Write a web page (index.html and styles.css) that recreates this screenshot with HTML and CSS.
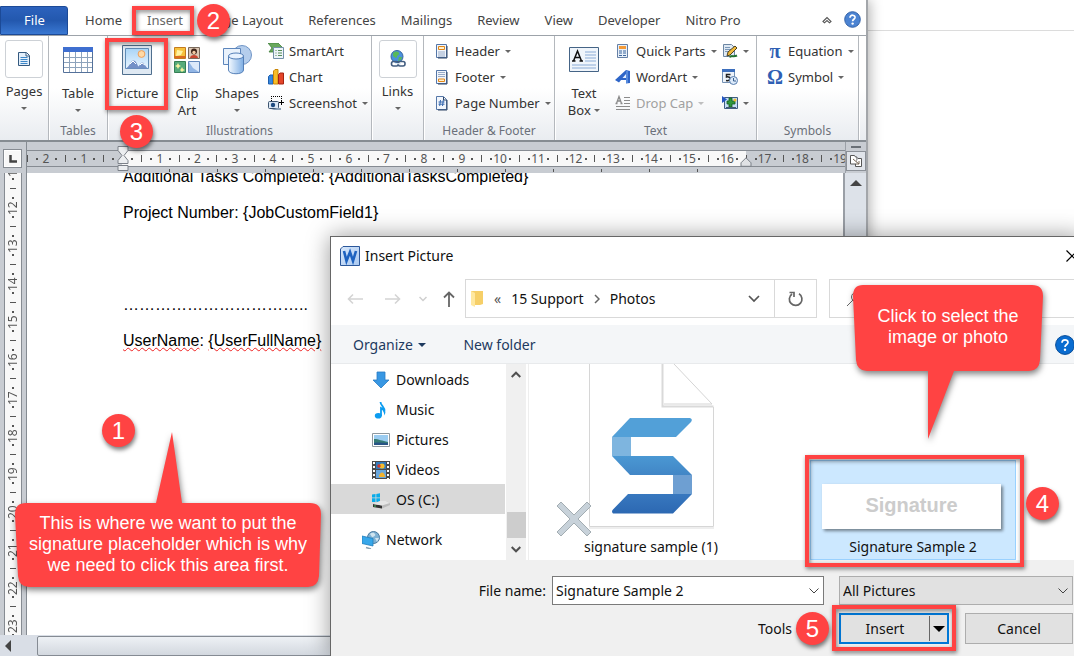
FILE: index.html
```html
<!DOCTYPE html>
<html lang="en">
<head>
<meta charset="utf-8">
<title>Insert Picture</title>
<link rel="stylesheet" href="styles.css">
</head>
<body>
<main class="desktop">
  <section class="word" aria-label="Word">
    <nav class="tabs">
      <button class="tab tab-file">File</button>
      <button class="tab">Home</button>
      <button class="tab tab-active">Insert</button>
      <button class="tab">Page Layout</button>
      <button class="tab">References</button>
      <button class="tab">Mailings</button>
      <button class="tab">Review</button>
      <button class="tab">View</button>
      <button class="tab">Developer</button>
      <button class="tab">Nitro Pro</button>
      <span class="tabs-end">
        <button class="plain" aria-label="Minimize ribbon"><svg width="10" height="8" viewBox="0 0 10 8"><path d="M1 5.500 5 1.500 9 5.500 7.500 6.800 5 4.600 2.500 6.800Z" fill="#fff" stroke="#555" stroke-width="1.100"/></svg></button>
        <button class="plain" aria-label="Help"><svg width="17" height="17" viewBox="0 0 17 17"><circle cx="8.500" cy="8.500" r="7.800" fill="#4b83d2" stroke="#3463a8"/><path d="M6 6.700c0-3.400 5.300-3.200 5 0-.2 1.500-2.400 1.700-2.400 3.500" fill="none" stroke="#fff" stroke-width="1.700"/><circle cx="8.600" cy="12.600" r="1.200" fill="#fff"/></svg></button>
      </span>
    </nav>

    <div class="ribbon">
      <section class="group g-pages">
        <div class="tools">
          <button class="large compact">
            <span class="large-icon boxed"><svg width="12" height="14" viewBox="0 0 12 14"><path d="M.5.500h8l3 3v10H.5z" fill="#e3effb" stroke="#34597f"/><path d="M8 1v3h3" fill="#fff" stroke="#34597f"/><path d="M2.500 5.500h7M2.500 7.500h7M2.500 9.500h7M2.500 11.500h7" stroke="#3b86c8"/></svg></span>
            <span>Pages</span><i class="caret"></i>
          </button>
        </div>
      </section>

      <section class="group g-tables">
        <div class="tools">
          <button class="large">
            <span class="large-icon"><svg width="30" height="26" viewBox="0 0 30 26"><path d="M.5.500h29v25H.5z" fill="#fff" stroke="#54719a"/><path d="M0 0h30v5H0z" fill="#3f6fd0"/><path d="M1 10.500h28M1 15.500h28M1 20.500h28M6.500 5v20M12.500 5v20M18.500 5v20M24.500 5v20" stroke="#8da3bc"/></svg></span>
            <span>Table</span><i class="caret"></i>
          </button>
        </div>
        <h2>Tables</h2>
      </section>

      <section class="group g-illus">
        <div class="tools">
          <button class="large">
            <span class="large-icon"><svg width="30" height="30" viewBox="0 0 30 30"><defs><linearGradient id="sky" x2="0" y2="1"><stop stop-color="#a9d4f6"/><stop offset="1" stop-color="#e9f5ff"/></linearGradient></defs><path d="M.5.500h29v29H.5z" fill="#dfe9f3" stroke="#4f6f8e"/><path d="M3.500 3.500h23v20h-23z" fill="url(#sky)" stroke="#5f8bb4"/><circle cx="19.500" cy="9" r="3.400" fill="#ffd9a5" stroke="#f0a05a"/><path d="M3.500 23.500c4-1 5-8 8-8s4 5 5 6c2-2 2-4 4-4s3 5 6 6z" fill="#7390c7"/><path d="m8 19 3-3 3 3M18 20l2-2 3 2" fill="none" stroke="#fff"/></svg></span>
            <span>Picture</span>
          </button>
          <button class="large">
            <span class="large-icon"><svg width="26" height="26" viewBox="0 0 26 26"><path d="M.5.500h11v11H.5z" fill="#f7c23c" stroke="#c47b1d"/><path d="M3 3l6 1-2 4-5 1z" fill="#fff3a1"/><path d="M1 9h10v2H1z" fill="#dc6a20"/><path d="M14.500.5h11v11h-11z" fill="#dcc8b4" stroke="#7a6a5c"/><circle cx="20" cy="4.500" r="3" fill="#40261a"/><circle cx="20" cy="5.500" r="1.700" fill="#f3c9a2"/><path d="M16 11c0-4 8-4 8 0z" fill="#c9452f"/><path d="M.5 14.500h11v11H.5z" fill="#56ab7b" stroke="#357f54"/><path d="m4 16 1 2 2 1-2 1-1 2-1-2-2-1 2-1zM8 20l1 2 2 1-2 1-1 1-1-1-1-1 1-1z" fill="#f8f2a0"/><path d="M14.500 14.500h11v11h-11z" fill="#91b5e5" stroke="#6388bc"/><path d="m15 15 4 6 6 4V15z" fill="#dce9fa"/></svg></span>
            <span>Clip</span><span>Art</span>
          </button>
          <button class="large">
            <span class="large-icon"><svg width="30" height="30" viewBox="0 0 30 30"><defs><linearGradient id="can"><stop stop-color="#f3f9ff"/><stop offset="1" stop-color="#7eaee4"/></linearGradient></defs><circle cx="20" cy="10" r="9.500" fill="#b4cdec" stroke="#6f94c6"/><path d="M1.500 3.500h17v16h-17z" fill="#e9f2fc" stroke="#5d86bc"/><path d="M6.500 11v14c0 5 15 5 15 0V11z" fill="url(#can)" stroke="#5580b8"/><ellipse cx="14" cy="11" rx="7.500" ry="3" fill="#e7f2ff" stroke="#5580b8"/></svg></span>
            <span>Shapes</span><i class="caret"></i>
          </button>
          <div class="stack">
            <button class="small"><svg width="16" height="16" viewBox="0 0 16 16"><path d="M0 0h10l4 4-3 5H1l3-4z" fill="#69a85c" stroke="#3f7d3b" stroke-width=".8"/><path d="M5.500 4.500h10v11h-10z" fill="#eef4fa" stroke="#7390a8"/><path d="M7.500 7.500h1M10 7.500h4M7.500 10h1M10 10h4M7.500 12.500h1M10 12.500h4" stroke="#568c56"/></svg><span>SmartArt</span></button>
            <button class="small"><svg width="16" height="16" viewBox="0 0 16 16"><path d="M.5 7.500 2 6h3v9H.5z" fill="#3889e0" stroke="#1d5fae"/><path d="M5.500 2 7 .5h3V15H5.500z" fill="#f8bd27" stroke="#c98608"/><path d="M10.500 5.500 12 4h3.500v11h-5z" fill="#e4452a" stroke="#a52412"/></svg><span>Chart</span></button>
            <button class="small"><svg width="16" height="16" viewBox="0 0 16 16"><path d="M3 1.500h11M3.500 1v5M13.500 1v5" stroke="#000" stroke-dasharray="1 1" fill="none"/><path d="M11 7.500h5M13.500 5v5" stroke="#000"/><rect x=".5" y="6.500" width="10" height="7" rx="1" fill="#dce8f4" stroke="#3d5570"/><circle cx="5" cy="10" r="2.200" fill="#1e4b80"/><path d="M9 13h4v2H3" fill="#8ba0b6"/></svg><span>Screenshot</span><i class="caret"></i></button>
          </div>
        </div>
        <h2>Illustrations</h2>
      </section>

      <section class="group g-links">
        <div class="tools">
          <button class="large compact">
            <span class="large-icon boxed"><svg width="16" height="18" viewBox="0 0 16 18"><circle cx="7" cy="6.500" r="6" fill="#4b91dd" stroke="#3566a0"/><path d="M3 3c2-2 5-2 6 0s-2 2-2 4-3 0-4-1zM9 7l3 0-1 3-3 1z" fill="#58b95b"/><rect x="1.500" y="11.500" width="7" height="4.500" rx="2" fill="none" stroke="#425d80" stroke-width="1.600"/><rect x="8" y="11.500" width="7" height="4.500" rx="2" fill="none" stroke="#425d80" stroke-width="1.600"/><path d="M5 13.700h6" stroke="#dce7f3" stroke-width="1.200"/></svg></span>
            <span>Links</span><i class="caret"></i>
          </button>
        </div>
      </section>

      <section class="group g-header">
        <div class="tools">
          <div class="stack">
            <button class="small"><svg width="16" height="16" viewBox="0 0 16 16"><path d="M2.500 1.500h10v13h-10z" fill="#f2f6fc" stroke="#5577a8"/><path d="M13 3v12H4" fill="none" stroke="#2e4565"/><path d="M4.500 3.500h6v3h-6z" fill="#fff1cf" stroke="#e08518"/><path d="M4 9h7M4 11h7M4 13h7" stroke="#98abc8"/></svg><span>Header</span><i class="caret"></i></button>
            <button class="small"><svg width="16" height="16" viewBox="0 0 16 16"><path d="M2.500 1.500h10v13h-10z" fill="#f2f6fc" stroke="#5577a8"/><path d="M13 3v12H4" fill="none" stroke="#2e4565"/><path d="M4.500 10h6v2.500h-6z" fill="#fff1cf" stroke="#e08518"/><path d="M4 3.500h7M4 5.500h7M4 7.500h7" stroke="#98abc8"/></svg><span>Footer</span><i class="caret"></i></button>
            <button class="small"><svg width="16" height="16" viewBox="0 0 16 16"><path d="M2.500 1.500h7l3 3v10h-10z" fill="#f2f6fc" stroke="#5577a8"/><path d="M9.500 2v3h3M13 5v10H4" fill="none" stroke="#2e4565"/><path d="m6.500 5-.8 6M9.300 5l-.8 6M4.500 7h6M4.500 9.200h6" stroke="#3567ae"/></svg><span>Page Number</span><i class="caret"></i></button>
          </div>
        </div>
        <h2>Header &amp; Footer</h2>
      </section>

      <section class="group g-text">
        <div class="tools">
          <button class="large">
            <span class="large-icon"><svg width="30" height="26" viewBox="0 0 30 26"><path d="M.5.500h29v24H.5z" fill="#f0f5fb" stroke="#456486"/><path d="m4.500 14 4-10 4 10M6 10.500h5M3 14h3.500M10.500 14H14" fill="none" stroke="#111" stroke-width="1.500"/><path d="M16 5h11M16 8h11M16 11h11M16 14h11M3 18h24M3 21h24" stroke="#8aabd6"/></svg></span>
            <span>Text</span><span class="with-caret">Box <i class="caret"></i></span>
          </button>
          <div class="stack">
            <button class="small"><svg width="16" height="16" viewBox="0 0 16 16"><path d="M2.500 1.500h10v13h-10z" fill="#e9f0f9" stroke="#6580a6"/><path d="M4 3h7v3H4z" fill="#f39a38"/><path d="M4 8h3M8 8h3M4 10h3M8 10h3M4 12.500h3M8 12.500h3" stroke="#3b679f"/></svg><span>Quick Parts</span><i class="caret"></i></button>
            <button class="small"><svg width="16" height="16" viewBox="0 0 16 16"><path d="M0 11 11 1l4 1v12l-4 .500V11H6l-2 2.500z" fill="#2e65c8"/><path d="M11 5 7.500 9H11z" fill="#e6f0ff"/><path d="M12 2v12" stroke="#7fb0f0"/></svg><span>WordArt</span><i class="caret"></i></button>
            <button class="small" disabled><svg width="16" height="16" viewBox="0 0 16 16"><path d="m1.500 8.500 2.500-7 2.500 7M2.500 6h3M.5 8.500h2M5.500 8.500h2" fill="none" stroke="#8b8b8b" stroke-width="1.300"/><path d="M9 2.500h6M9 5.500h6M9 8.500h6M1 11.500h14M1 14.500h14" stroke="#8b8b8b"/></svg><span>Drop Cap</span><i class="caret"></i></button>
          </div>
          <div class="stack">
            <button class="small" aria-label="Signature line"><svg width="16" height="16" viewBox="0 0 16 16"><path d="M1.500 1.500h8l3 3v9h-11z" fill="#dfe9f3" stroke="#6c86a3"/><path d="M3 4.500h5M3 6.500h6M3 8.500h4" stroke="#7b98b8"/><path d="m5 13 1-4 7-6 2 2-7 7z" fill="#f0b93c" stroke="#4f431f"/><path d="M8 14.500c1-3 3 0 7-2" fill="none" stroke="#247331" stroke-width="2"/></svg><i class="caret"></i></button>
            <button class="small" aria-label="Date and time"><svg width="16" height="16" viewBox="0 0 16 16"><path d="M.5.500h12v13H.5z" fill="#edf3fa" stroke="#7491b3"/><path d="M0 0h13v3H0z" fill="#3d6fbd"/><path d="M8.500 5.500h-4v2.500c5-1 5 4.500-.5 3.500" fill="none" stroke="#222" stroke-width="1.500"/><circle cx="11.500" cy="11.500" r="4" fill="#dceafa" stroke="#587dad"/><path d="M11.500 9v3h2.500" fill="none" stroke="#375d8d"/></svg></button>
            <button class="small" aria-label="Object"><svg width="16" height="16" viewBox="0 0 16 16"><path d="M2.500 2.500h13v11h-13z" fill="#c4dcf6" stroke="#3f5d82"/><path d="M0 1v7l5-3.500z" fill="#2456c0"/><path d="M7 3h3v3h3v3h-3v3H7V9H5V6h2z" fill="#2d963b" stroke="#145b22" stroke-width=".8"/><circle cx="13" cy="5" r="1.500" fill="#f2bd2c"/><path d="M4 12.500h10" stroke="#445a70"/></svg><i class="caret"></i></button>
          </div>
        </div>
        <h2>Text</h2>
      </section>

      <section class="group g-symbols">
        <div class="tools">
          <div class="stack">
            <button class="small"><span class="glyph">π</span><span>Equation</span><i class="caret"></i></button>
            <button class="small"><span class="glyph">Ω</span><span>Symbol</span><i class="caret"></i></button>
          </div>
        </div>
        <h2>Symbols</h2>
      </section>
    </div>

    <div class="ruler-row">
      <div class="corner"><button aria-label="Tab stop"><svg width="8" height="8" viewBox="0 0 8 8"><path d="M1.500 0v6.500H8" fill="none" stroke="#444" stroke-width="2.500"/></svg></button></div>
      <div class="ruler-track">
        <div class="ruler">
          <span class="cm out">2</span><span class="cm out">1</span><span class="cm zero"></span><span class="cm">1</span><span class="cm">2</span><span class="cm">3</span><span class="cm">4</span><span class="cm">5</span><span class="cm">6</span><span class="cm">7</span><span class="cm">8</span><span class="cm">9</span><span class="cm">10</span><span class="cm">11</span><span class="cm">12</span><span class="cm">13</span><span class="cm">14</span><span class="cm">15</span><span class="cm">16</span><span class="cm out">17</span><span class="cm out">18</span><span class="cm out">19</span>
        </div>
        <div class="tab-stops"></div>
        <svg class="indent-left" width="12" height="26" viewBox="0 0 12 26"><path d="M1 .5h10v4L7 9.500l4 5v3H1v-3l4-5-4-5zM1 19.500h10v5H1z" fill="#eceef0" stroke="#7b8088"/></svg>
        <svg class="indent-right" width="12" height="10" viewBox="0 0 12 10"><path d="m6 .8 5 5v3.500H1V5.800z" fill="#e0e2e5" stroke="#7b8088"/></svg>
      </div>
      <div class="view-col"><i class="split"></i><button aria-label="View ruler"><svg width="12" height="12" viewBox="0 0 12 12"><path d="M.5.500h4l1 1.500h1.500v5l-1.500 2H.5z" fill="#fff" stroke="#555"/><path d="M8 3.500h3.500v8h-6V9" fill="#fff" stroke="#555"/><path d="m3 4 6 5M9 6v3H6" fill="none" stroke="#765"/></svg></button></div>
    </div>

    <div class="doc-row">
      <div class="vruler">
        <span class="vcm first">11</span><span class="vcm">12</span><span class="vcm">13</span><span class="vcm">14</span><span class="vcm">15</span><span class="vcm">16</span><span class="vcm">17</span><span class="vcm">18</span><span class="vcm">19</span><span class="vcm">20</span><span class="vcm">21</span><span class="vcm">22</span><span class="vcm">23</span>
      </div>
      <article class="page">
        <p>Additional Tasks Completed: {AdditionalTasksCompleted}</p>
        <p>Project Number: {JobCustomField1}</p>
        <p class="sign-line">……………………………..</p>
        <p><span class="misspelt">UserName</span>: <span class="misspelt">{UserFullName}</span></p>
      </article>
      <div class="vscroll"><svg width="12" height="6" viewBox="0 0 12 6"><path d="M0 6 6 0l6 6z" fill="#444"/></svg></div>
    </div>
    <div class="hscroll"><svg width="6" height="12" viewBox="0 0 6 12"><path d="M6 0 0 6l6 6z" fill="#444"/></svg><div class="hthumb"></div></div>
  </section>

  <section class="dialog" role="dialog" aria-label="Insert Picture">
    <header class="title-bar">
      <svg width="20" height="20" viewBox="0 0 20 20"><defs><linearGradient id="wd" x2="1" y2="1"><stop stop-color="#d8e8fb"/><stop offset="1" stop-color="#a9c8f0"/></linearGradient></defs><path d="M3 .5h16.500v19H.5V3z" fill="url(#wd)" stroke="#2b579a"/><path d="m4 5 2.500 10L10 6l3 9L16 5" fill="none" stroke="#1d62c0" stroke-width="2.600"/></svg>
      <h1>Insert Picture</h1>
      <button class="plain close" aria-label="Close"><svg width="12" height="12" viewBox="0 0 12 12"><path d="m.5.500 11 11M11.500.5l-11 11" stroke="#000" stroke-width="1.200"/></svg></button>
    </header>

    <div class="nav-row">
      <div class="nav-arrows">
        <button class="plain" aria-label="Back"><svg width="16" height="12" viewBox="0 0 16 12"><path d="M16 6H1.500M6 1.500 1.500 6 6 10.500" fill="none" stroke="#d4d4d4" stroke-width="1.600"/></svg></button>
        <button class="plain" aria-label="Forward"><svg width="16" height="12" viewBox="0 0 16 12"><path d="M0 6h14.500M10 1.500 14.500 6 10 10.500" fill="none" stroke="#d4d4d4" stroke-width="1.600"/></svg></button>
        <button class="plain" aria-label="Recent"><svg width="8" height="6" viewBox="0 0 8 6"><path d="m.5 1 3.500 3.500L7.500 1" fill="none" stroke="#cfcfcf" stroke-width="1.500"/></svg></button>
        <button class="plain" aria-label="Up"><svg width="12" height="16" viewBox="0 0 12 16"><path d="M6 16V1.500M1 6.500l5-5 5 5" fill="none" stroke="#666" stroke-width="1.800"/></svg></button>
      </div>
      <div class="address">
        <svg width="13" height="18" viewBox="0 0 13 18"><path d="M0 1h12v13l-3 1H0z" fill="#f6cf68"/><path d="M0 1l4 2v14l-4-2z" fill="#ffe8a0"/></svg>
        <span class="crumb-sep">«</span>
        <span>15 Support</span>
        <svg width="6" height="10" viewBox="0 0 6 10"><path d="m1 1 4 4-4 4" fill="none" stroke="#666" stroke-width="1.500"/></svg>
        <span>Photos</span>
        <button class="plain addr-down" aria-label="Previous locations"><svg width="12" height="8" viewBox="0 0 12 8"><path d="m1 1 5 5 5-5" fill="none" stroke="#555" stroke-width="1.700"/></svg></button>
        <button class="plain refresh" aria-label="Refresh"><svg width="16" height="16" viewBox="0 0 16 16"><path d="M11 2.800A6.300 6.300 0 1 1 4 3M1.500 1.500H6V6" fill="none" stroke="#666" stroke-width="1.700"/></svg></button>
      </div>
      <label class="search"><svg width="16" height="16" viewBox="0 0 16 16"><circle cx="10" cy="6" r="4.500" fill="none" stroke="#666"/><path d="m1 15 6-6" stroke="#666"/></svg><input type="text" aria-label="Search"></label>
    </div>

    <div class="command-row">
      <button>Organize <i class="caret"></i></button>
      <button>New folder</button>
      <button class="help" aria-label="Help"><svg width="20" height="20" viewBox="0 0 20 20"><circle cx="10" cy="10" r="9.400" fill="#0a6cd0" stroke="#084d98"/><path d="M7 7.800C7 4 13 4 13 7.400c0 2-3 2.200-3 4.600" fill="none" stroke="#fff" stroke-width="1.700"/><circle cx="10" cy="14.700" r="1.200" fill="#fff"/></svg></button>
    </div>

    <div class="browser">
      <ul class="tree">
        <li><svg width="18" height="18" viewBox="0 0 18 18"><path d="M5 1h8v8h4l-8 8-8-8h4z" fill="#3897e3" stroke="#2a7cc4" stroke-width=".8"/></svg>Downloads</li>
        <li><svg width="18" height="18" viewBox="0 0 18 18"><path d="M8.500 1c0 4 5 5 4 10-1-3-2.500-3.500-3.500-4v8" fill="none" stroke="#0c9cf0" stroke-width="1.800"/><ellipse cx="6.300" cy="14.700" rx="3.500" ry="2.800" fill="#0c9cf0"/></svg>Music</li>
        <li><svg width="18" height="18" viewBox="0 0 18 18"><path d="M.5 2.500h17v13H.5z" fill="#fff" stroke="#8e989f"/><path d="M2 4h14v10H2z" fill="#9bccf1"/><path d="M2 8c5 0 8 2 14 3v3H2z" fill="#367c75"/><path d="M2 12c5-1 9 0 14 0v2H2z" fill="#285486"/></svg>Pictures</li>
        <li><svg width="18" height="18" viewBox="0 0 18 18"><path d="M0 0h18v18H0z" fill="#4a4a4a"/><path d="M4 1h10v7H4z" fill="#317bbd"/><path d="M4 9h10v8H4z" fill="#69a7dd"/><circle cx="10" cy="5" r="2.600" fill="#f4bd2f"/><circle cx="7" cy="5" r="1.700" fill="#d5372e"/><path d="M7 16c0-6 6-6 6 0z" fill="#f1b22e"/><path d="M2 1v17M16 1v17" stroke="#fff" stroke-width="2" stroke-dasharray="2 2"/></svg>Videos</li>
        <li class="selected"><svg width="18" height="18" viewBox="0 0 18 18"><path d="M0 3.500 3.500 3v3.500H0zM4.300 2.900 8 2.300v4.200H4.300zM0 7.300h3.500V11H0zM4.300 7.300H8v4l-3.700-.5z" fill="#09acea"/><path d="m1 13 7-3h6l4 2v2l-8 3.500L1 16z" fill="#bbb"/><path d="m1 13 9 1.500v3L1 16z" fill="#333"/><path d="m1 13 7-3h6l4 2-8 2.500z" fill="#e5e5e5"/><circle cx="3" cy="15" r=".8" fill="#4cd66a"/></svg>OS (C:)</li>
        <li class="root"><svg width="18" height="18" viewBox="0 0 18 18"><circle cx="11.500" cy="6.500" r="6" fill="#7fb1d3" stroke="#49789d"/><path d="M8 3c2-2 4-1 5 0s-1 3-3 3zM13 7l4 0-2 4z" fill="#d0e4ef"/><path d="m0 5 11 2.500V15L0 12.500z" fill="#37a7ea" stroke="#1f7dbd" stroke-width=".8"/><path d="M4 16.500 9 18" stroke="#8ba1b0" stroke-width="1.500"/></svg>Network</li>
      </ul>
      <div class="tree-scroll">
        <svg width="10" height="7" viewBox="0 0 10 7"><path d="m.7 6 4.300-4.300L9.300 6" fill="none" stroke="#505050" stroke-width="2"/></svg>
        <div class="tree-thumb"></div>
        <svg width="10" height="7" viewBox="0 0 10 7"><path d="m.7 1 4.300 4.300L9.300 1" fill="none" stroke="#505050" stroke-width="2"/></svg>
      </div>
      <div class="files">
        <figure class="file">
          <svg width="160" height="172" viewBox="0 0 160 172">
            <defs><linearGradient id="s1" x2="0" y2="1"><stop stop-color="#4a98d3"/><stop offset="1" stop-color="#4286c6"/></linearGradient><linearGradient id="s2" x2="0" y2="1"><stop stop-color="#3878bf"/><stop offset="1" stop-color="#2c68b2"/></linearGradient></defs>
            <path d="M33 0v163h125V44L119 0" fill="#fff"/><path d="M33.500 0v162.500h124V43" fill="none" stroke="#d6d6d6"/><path d="M33 164h125" stroke="#ddd"/><path d="M106.500 0v42.500h51" fill="none" stroke="#d9d9d9" stroke-width="2"/><path d="M108 0v40h48L118 0z" fill="#fff"/><path d="m118 0 38 40h-48" fill="none" stroke="#d4d4d4"/>
            <path d="M74 54h60q3 1 1 4l-15 15H56z" fill="#52a0d8"/><path d="M56 73h19v19H56z" fill="#7eb5df"/><path d="M56 92h61l19 19H74z" fill="url(#s1)"/><path d="M117 111h19v19h-19z" fill="#6e9fd2"/><path d="M72 130h64l-19 19.500H57q-2-2 0-4z" fill="url(#s2)"/>
            <path d="m5 138 13 13 13-13 4 4-13 13 13 13-4 4-13-13-13 13-4-4 13-13-13-13z" fill="#c8d2da" stroke="#a3adb2"/>
          </svg>
          <figcaption>signature sample (1)</figcaption>
        </figure>
        <figure class="file picked">
          <div class="thumb">Signature</div>
          <figcaption>Signature Sample 2</figcaption>
          <span class="mark mark-file"></span>
          <span class="badge badge-4">4</span>
        </figure>
      </div>
    </div>

    <footer class="dialog-foot">
      <label class="name-label" for="fname">File name:</label>
      <div class="combo"><input id="fname" type="text" value="Signature Sample 2"><svg width="10" height="6" viewBox="0 0 10 6"><path d="m.5.500 4.500 4.500L9.500.5" fill="none" stroke="#444"/></svg></div>
      <div class="filter"><select aria-label="File type"><option>All Pictures</option></select><svg width="10" height="6" viewBox="0 0 10 6"><path d="m.5.500 4.500 4.500L9.500.5" fill="none" stroke="#444"/></svg></div>
      <button class="plain tools-btn">Tools</button>
      <div class="actions">
        <div class="insert">
          <button class="insert-main">Insert</button><button class="insert-more" aria-label="Insert options"><svg width="12" height="6" viewBox="0 0 12 6"><path d="M0 0h12L6 6z"/></svg></button>
          <span class="mark mark-insert"></span>
          <span class="badge badge-5">5</span>
        </div>
        <button class="cancel">Cancel</button>
      </div>
    </footer>
  </section>

  <span class="mark mark-tab"></span>
  <span class="mark mark-picture"></span>
  <span class="badge badge-1">1</span>
  <span class="badge badge-2">2</span>
  <span class="badge badge-3">3</span>

  <aside class="callout callout-place">
    <svg width="306" height="156" viewBox="0 0 306 156"><path d="M11 71H141L157 0l10 71H295q11 0 11 11l-2 62q-1 11-11 11H14q-10 0-11-11L0 82Q0 71 11 71z"/></svg>
    <p>This is where we want to put the signature placeholder which is why we need to click this area first.</p>
  </aside>
  <aside class="callout callout-select">
    <svg width="190" height="156" viewBox="0 0 190 156"><path d="M10 0h169q11 0 11 11l-3 64q-1 11-11 11h-75L75 154V86H14Q4 86 3 75L0 11Q0 0 10 0z"/></svg>
    <p>Click to select the image or photo</p>
  </aside>
</main>
</body>
</html>
```
FILE: styles.css
```css
* { box-sizing: border-box; }

body {
  margin: 0;
  background: #fff;
  color: #111;
  font: 14px/20px "Noto Sans", "Open Sans", sans-serif;
}

h1, h2, p, ul, figure { margin: 0; padding: 0; }
button, input, select { font: inherit; color: inherit; margin: 0; padding: 0; }
button { border: 0; background: none; }
svg { display: block; flex: none; }
.plain { display: flex; align-items: center; justify-content: center; }

.desktop {
  position: relative;
  height: 100vh;
  overflow: hidden;
  background: linear-gradient(#dcdcdc, #dcdcdc) 0 30px / 100% 1px no-repeat #fff;
}

/* Word window */
.word {
  position: relative;
  display: flex;
  flex-direction: column;
  width: calc(100% - 206px);
  height: 100%;
  background: #fff;
  border-right: 2px solid #a3a6aa;
  box-shadow: 2px 0 12px rgba(0, 0, 0, .3);
  font-size: 13px;
  line-height: 17px;
}

.tabs {
  display: flex;
  align-items: stretch;
  height: 36px;
  padding-top: 6px;
  border-bottom: 1px solid #9da3aa;
  flex: none;
}
.tab { padding: 0 12px 0 13px; color: #444; white-space: nowrap; }
.tab-file {
  width: 68px;
  margin-right: 4px;
  color: #fff;
  background: linear-gradient(#2c62bd, #2358ae 50%, #3a78d2);
  border: 1px solid #1c4a97;
  border-radius: 0 3px 0 0;
}
.tab-active { color: #666; }
.tabs-end { display: flex; align-items: center; gap: 12px; margin-left: auto; padding: 0 5px 2px 0; }

.ribbon {
  display: flex;
  flex: none;
  height: 106px;
  background: linear-gradient(#fff 50%, #e9ecf0);
  border-bottom: 2px solid #868c92;
  color: #333;
}
.group {
  display: flex;
  flex-direction: column;
  flex: none;
  border-right: 1px solid #b4b8bd;
  box-shadow: 1px 0 #fff;
}
.group h2 { font-size: 12px; font-weight: 400; line-height: 18px; text-align: center; color: #6b707a; }
.tools { display: flex; height: 86px; padding-top: 2px; }
.g-pages { width: 49px; }
.g-tables { width: 59px; }
.g-illus { width: 264px; }
.g-links { width: 52px; }
.g-header { width: 131px; }
.g-text { width: 202px; }
.g-symbols { width: 102px; }
.g-illus .tools, .g-text .tools { padding-left: 4px; }
.g-header .tools, .g-symbols .tools { padding-left: 10px; }

.large { display: flex; flex-direction: column; align-items: center; width: 50px; }
.g-tables .large { width: 59px; }
.g-text .large { margin-right: 6px; }
.large-icon { display: flex; align-items: center; justify-content: center; height: 44px; margin-bottom: 3px; }
.large > .caret { margin-top: 7px; }
.compact { width: 48px; }
.g-links .compact { width: 51px; }
.boxed {
  width: 38px;
  height: 38px;
  margin: 2px 0 5px;
  border: 1px solid #cdd1d6;
  border-radius: 3px;
  background: #fff;
}
.caret { display: inline-block; border: 3px solid transparent; border-top-color: #666; border-bottom: 0; flex: none; }
.with-caret .caret { vertical-align: 3px; }
.stack { display: flex; flex-direction: column; }
.stack + .stack { margin-left: 5px; }
.g-illus .stack { margin-left: 6px; }
.small { display: flex; align-items: center; gap: 5px; height: 26px; white-space: nowrap; }
.small:disabled { color: #a0a0a0; }
.small:disabled .caret { opacity: .4; }
.glyph { width: 16px; font: bold 20px/20px "Liberation Serif", serif; color: #2f5fb4; text-align: center; }

/* Rulers */
.ruler-row { display: flex; flex: none; height: 31px; background: #c8ccd2; }
.corner { width: 27px; padding: 7px 0 0 3px; border-right: 1px solid #858b92; }
.corner button {
  display: flex;
  align-items: center;
  justify-content: center;
  width: 19px;
  height: 19px;
  border: 1px solid #868b92;
  background: #f7f7f7;
  box-shadow: inset 0 0 0 1px #fff;
}
.ruler-track { position: relative; flex: 1; min-width: 0; overflow: hidden; padding-top: 8px; }
.ruler { display: flex; height: 17px; width: 832px; border: solid #868b92; border-width: 1px 0; font-size: 12px; line-height: 15px; color: #555; }
.cm {
  width: 38px;
  flex: none;
  text-align: center;
  background:
    linear-gradient(#555, #555) 0 50% / 1px 7px no-repeat,
    linear-gradient(#555, #555) 9px 50% / 2px 2px no-repeat,
    linear-gradient(#555, #555) 28px 50% / 2px 2px no-repeat,
    #f8f8f8;
}
.cm:nth-child(5n) { width: 37px; }
.cm.out { background-color: #c8ccd2; }
.cm.zero {
  background:
    linear-gradient(#555, #555) 0 50% / 1px 7px no-repeat,
    linear-gradient(#555, #555) 9px 50% / 2px 2px no-repeat,
    linear-gradient(#555, #555) 28px 50% / 2px 2px no-repeat,
    linear-gradient(90deg, #c8ccd2 50%, #f8f8f8 50%);
}
.tab-stops {
  height: 5px;
  margin: 2px 100px 0 95px;
  background: repeating-linear-gradient(90deg, transparent 0 47px, #555 47px 48px) 0 0 / 100% 3px no-repeat;
}
.indent-left { position: absolute; left: 90px; top: 4px; }
.indent-right { position: absolute; left: 713px; top: 15px; }
.view-col { width: 21px; flex: none; border-left: 1px solid #9ba0a7; padding-top: 4px; }
.split { display: block; width: 10px; height: 2px; margin: 0 auto 3px; background: #6a7077; }
.view-col button { display: flex; align-items: center; justify-content: center; width: 20px; height: 20px; border: 1px solid #8b9097; background: #dfe3e9; }

.doc-row { display: flex; flex: 1; min-height: 0; }
.vruler {
  width: 27px;
  padding: 0 6px 0 4px;
  overflow: hidden;
  background: #c8ccd2;
  border-right: 1px solid #858b92;
  font-size: 12px;
  color: #555;
}
.vcm {
  display: flex;
  align-items: center;
  justify-content: center;
  height: 38px;
  line-height: 16px;
  writing-mode: vertical-rl;
  transform: rotate(180deg);
  border: solid #868b92;
  border-width: 0 1px;
  background:
    linear-gradient(#555, #555) 50% 0 / 6px 1px no-repeat,
    linear-gradient(#555, #555) 50% 9px / 2px 2px no-repeat,
    linear-gradient(#555, #555) 50% 28px / 2px 2px no-repeat,
    #f8f8f8;
}
.vcm.first { margin-top: -22px; }
.page {
  flex: 1;
  min-width: 0;
  padding: 0 96px;
  overflow: hidden;
  background: #fff;
  color: #000;
  font: 16px/20px "Liberation Sans", Arial, sans-serif;
}
.page p { margin-bottom: 16px; }
.page p:first-child { margin-top: -6px; }
.page .sign-line { margin-top: 72px; }
.misspelt { text-decoration: underline wavy #e22 1px; text-underline-offset: 1px; }
.vscroll { width: 23px; flex: none; padding: 7px 0 0 5px; background: #dde2e9; border-left: 2px solid #9a9fa6; }
.hscroll { display: flex; align-items: center; gap: 26px; flex: none; height: 21px; padding-left: 5px; background: #d9dee6; }
.hthumb { flex: 1; height: 20px; border: 1px solid #858b93; border-radius: 2px; background: linear-gradient(#eef1f5, #d3d8df); }

/* Insert Picture dialog */
.dialog {
  position: absolute;
  top: 236px;
  left: 330px;
  right: -8px;
  bottom: 0;
  display: flex;
  flex-direction: column;
  border: solid #666;
  border-width: 1px 0 0 1px;
  background: #fff;
  box-shadow: 0 0 22px rgba(0, 0, 0, .4);
}
.title-bar { display: flex; align-items: center; gap: 5px; height: 37px; flex: none; padding: 0 4px 0 9px; }
.title-bar h1 { font-size: 14px; font-weight: 400; }
.close { margin-left: auto; }

.nav-row { display: flex; height: 51px; flex: none; padding: 5px 0 7px; }
.nav-arrows { display: flex; align-items: center; width: 134px; padding-left: 16px; }
.nav-arrows button { width: 38px; justify-content: flex-start; }
.nav-arrows button:nth-child(2) { width: 34px; }
.nav-arrows button:nth-child(3) { width: 24px; }
.nav-arrows button:nth-child(4) { width: 12px; }
.address { display: flex; align-items: center; flex: 0 1 352px; padding-left: 5px; gap: 10px; border: 1px solid #d9d9d9; }
.crumb-sep { color: #555; }
.addr-down { margin-left: auto; width: 20px; }
.refresh { width: 42px; align-self: stretch; border-left: 1px solid #d9d9d9; }
.search { display: flex; align-items: center; flex: 1; min-width: 0; margin-left: 12px; padding-left: 16px; border: 1px solid #d9d9d9; }
.search input { flex: 1; min-width: 0; border: 0; outline: 0; }

.command-row { display: flex; align-items: center; gap: 37px; height: 39px; flex: none; padding: 1px 7px 0 22px; background: #f4f6f8; border-bottom: 1px solid #e8eaec; color: #1e3a5f; }
.command-row .caret { border-width: 4px 4px 0; border-top-color: #1e3a5f; vertical-align: 3px; margin-left: 2px; }
.help { margin-left: auto; }

.browser { display: flex; flex: none; height: 196px; }
.tree { width: 174px; list-style: none; }
.tree li { display: flex; align-items: center; gap: 6px; height: 30px; padding: 1px 0 0 41px; }
.tree .selected { background: #d9d9d9; }
.tree .root { margin-top: 10px; padding-left: 31px; }
.tree-scroll { display: flex; flex-direction: column; align-items: center; width: 20px; margin-left: 1px; padding: 7px 0; background: #f0f0f0; }
.tree-thumb { width: 19px; height: 26px; margin: auto 0 8px; background: #cdcdcd; }
.files { display: flex; align-items: flex-start; flex: 1; min-width: 0; border-left: 1px solid #eee; margin-left: 2px; }
.file { position: relative; margin-left: 27px; width: 190px; text-align: center; }
.file figcaption { line-height: 20px; margin-top: 1px; }
.file.picked { width: 206px; margin: 96px 0 0 64px; height: 100px; padding-top: 23px; background: #cce8ff; border: 1px solid #99d1ff; }
.picked .thumb {
  height: 45px;
  margin: 0 14px 0 11px;
  background: #fff;
  box-shadow: 2px 2px 3px rgba(0, 0, 0, .45);
  color: #ccc;
  font: bold 20px/42px "Liberation Sans", Arial, sans-serif;
}
.picked figcaption { margin-top: 8px; }

.dialog-foot {
  display: grid;
  grid-template-columns: 215px 272px 1fr;
  grid-template-rows: 29px 31px;
  row-gap: 8px;
  flex: 1;
  padding: 16px 9px 0 0;
  background: #f0f0f0;
}
.name-label { justify-self: end; align-self: center; }
.dialog-foot .combo { position: relative; margin-left: 6px; width: 272px; }
.combo input { width: 100%; height: 29px; padding: 0 24px 0 3px; border: 1px solid #7a7a7a; background: #fff; }
.combo svg, .filter svg { position: absolute; right: 5px; top: 12px; pointer-events: none; }
.filter { position: relative; margin-left: 21px; }
.filter select { appearance: none; width: 100%; height: 29px; padding-left: 3px; border: 1px solid #adadad; border-radius: 0; background: #e1e1e1; }
.tools-btn { grid-column: 2; justify-self: end; margin-right: 26px; align-items: center; }
.actions { display: flex; gap: 16px; margin-left: 21px; }
.insert { position: relative; display: flex; flex: 1; border: 2px solid #0078d7; background: #e1e1e1; }
.insert-main { flex: 1; }
.insert-more { display: flex; align-items: center; justify-content: center; width: 18px; margin: 1px 0; border-left: 1px solid #666; }
.cancel { flex: 1; border: 1px solid #adadad; background: #e1e1e1; }

/* Annotations */
.mark { position: absolute; border: 4px solid #ff4343; filter: drop-shadow(1px 2px 2px rgba(0, 0, 0, .5)); pointer-events: none; }
.mark-tab { left: 132px; top: 6px; width: 62px; height: 29px; }
.mark-picture { left: 105px; top: 38px; width: 63px; height: 72px; }
.mark-file { inset: -6px -9px -8px -6px; }
.mark-insert { inset: -10px -9px -9px -9px; }
.badge {
  position: absolute;
  width: 33px;
  height: 33px;
  border-radius: 50%;
  background: #ff4343;
  box-shadow: 1px 3px 4px rgba(0, 0, 0, .5);
  color: #fff;
  font: 24px/33px "Liberation Sans", Arial, sans-serif;
  text-align: center;
}
.badge-1 { left: 102px; top: 414px; }
.badge-2 { left: 197px; top: 4px; }
.badge-3 { left: 120px; top: 115px; }
.badge-4 { right: -44px; top: 26px; }
.badge-5 { left: -45px; top: -3px; }

.callout {
  position: absolute;
  color: #fff;
  font: 18px/21px "Liberation Sans", Arial, sans-serif;
  text-align: center;
}
.callout svg { fill: #ff4343; filter: drop-shadow(1px 3px 3px rgba(0, 0, 0, .5)); overflow: visible; }
.callout p { position: absolute; }
.callout-place { left: 15px; top: 432px; width: 306px; }
.callout-place p { inset: 81px 8px 0; }
.callout-select { left: 853px; top: 285px; width: 190px; }
.callout-select p { inset: 21px 20px 0; }
```
